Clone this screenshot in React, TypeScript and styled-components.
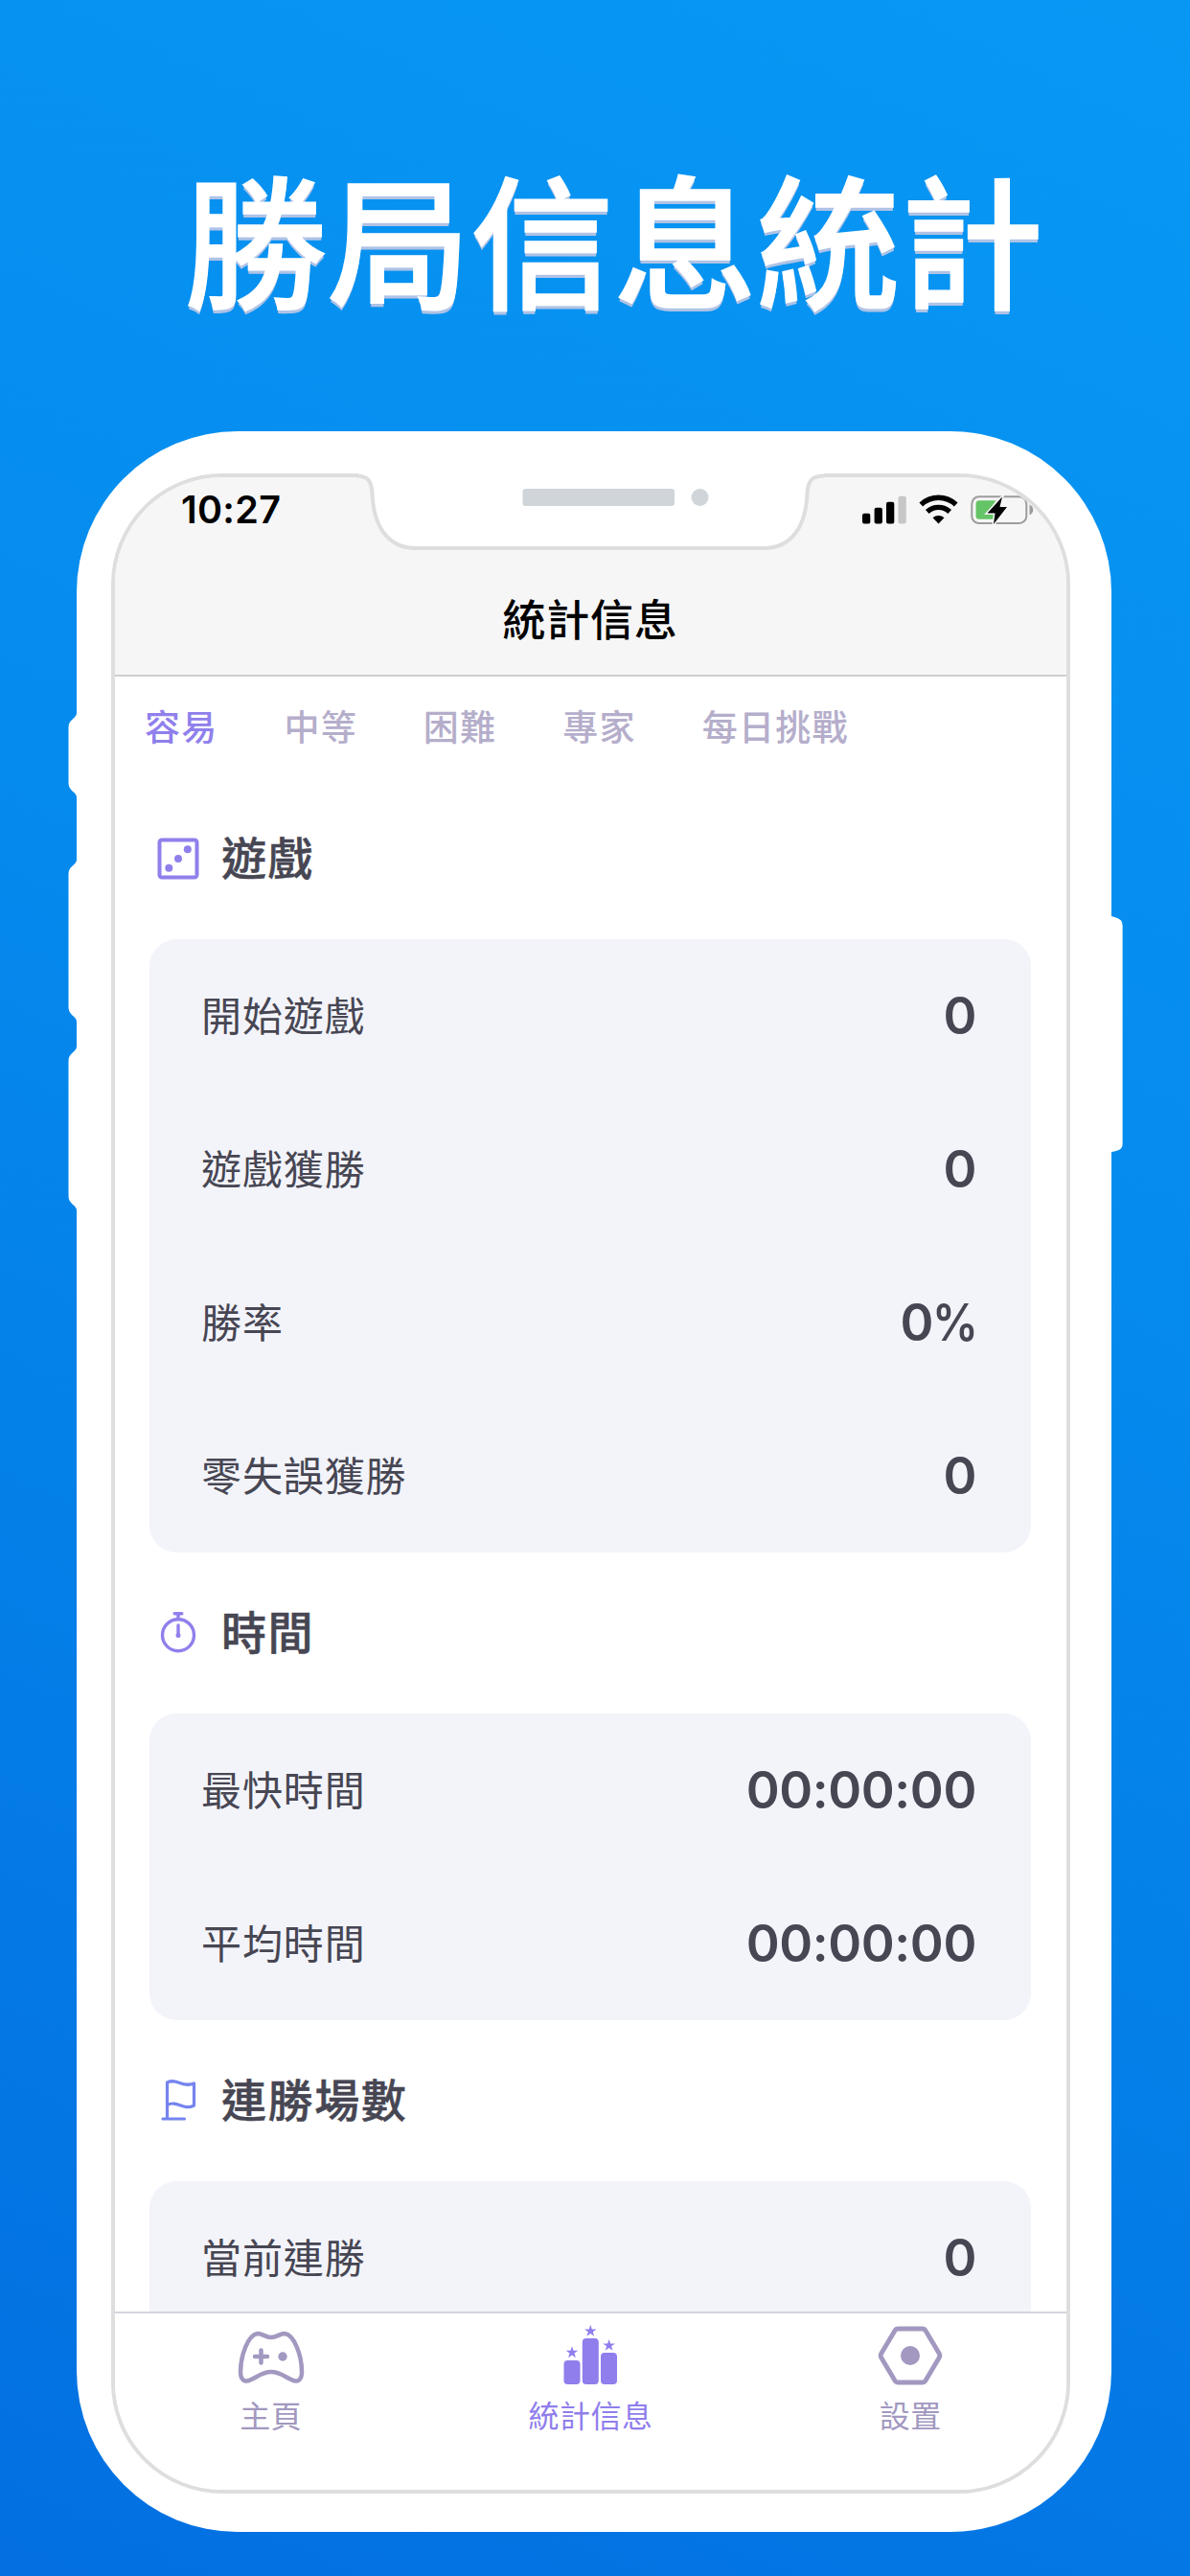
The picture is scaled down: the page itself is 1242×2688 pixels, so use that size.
import React from "react";
import styled, { createGlobalStyle } from "styled-components";

const CJK = `"Noto Sans CJK TC", sans-serif`;
const LATIN = `Inter, "Noto Sans CJK TC", sans-serif`;

const GlobalStyle = createGlobalStyle`
  * { box-sizing: border-box; }
  body { margin: 0; }
`;

const Poster = styled.main`
  width: 1242px;
  height: 2688px;
  overflow: hidden;
  display: flex;
  flex-direction: column;
  background: linear-gradient(205deg, #0898f4 0%, #058bee 40%, #036fe1 100%);
  font-family: ${CJK};
`;

const Headline = styled.h1`
  margin: 0;
  height: 450px;
  padding: 141px 0 0 192px;
  color: #fff;
  font-size: 149.5px;
  line-height: 210px;
  font-weight: 500;
  white-space: nowrap;
  -webkit-text-stroke: 1.5px #fff;
  text-shadow: 0 2px 0 #afc3e6, 0 4px 0 #afc3e6;
`;

const Phone = styled.div`
  position: relative;
  width: 1080px;
  height: 2192px;
  margin-left: 80px;
  padding: 44px 43px 40px 36px;
  border-radius: 168px;
  background: #fff;
`;

const SideKeys = styled.svg<{ $left: number }>`
  position: absolute;
  top: 0;
  left: ${(p) => p.$left}px;
`;

const Screen = styled.div`
  height: 2108px;
  border: 4px solid #dedede;
  border-radius: 116px;
  overflow: hidden;
  display: flex;
  flex-direction: column;
  background: #fff;
`;

const NotchArt = styled.svg`
  position: absolute;
  top: 40px;
  left: 280px;
`;

const NavBar = styled.header`
  flex: none;
  height: 208px;
  background: #f6f6f6;
  border-bottom: 2px solid #cfcfcf;
`;

const StatusBar = styled.div`
  display: flex;
  justify-content: space-between;
  height: 72px;
  padding: 13px 0 0 69px;
`;

const Clock = styled.span`
  padding-top: 3px;
  font: 600 39.5px/36px ${LATIN};
  letter-spacing: 0.3px;
  color: #000;
`;

const NavTitle = styled.h2`
  margin: 42px 0 0;
  font-size: 45px;
  line-height: 66px;
  font-weight: 500;
  text-align: center;
  letter-spacing: 0.7px;
  color: #000;
  padding-right: 1px;
`;

const Tabs = styled.nav`
  flex: none;
  display: flex;
  gap: 68.8px;
  height: 106px;
  padding: 24px 0 0 31px;
`;

const Tab = styled.span<{ $active?: boolean }>`
  font-size: 37px;
  line-height: 54px;
  letter-spacing: 1.3px;
  font-weight: 500;
  color: ${(p) => (p.$active ? "#8f80ec" : "#b5aecb")};
`;

const Content = styled.section`
  flex: 1;
  min-height: 0;
  overflow: hidden;
  padding: 0 37px 0 36px;
`;

const SectionHead = styled.div`
  display: flex;
  align-items: center;
  height: 168px;
  padding: 0 0 0 5px;
`;

const SectionTitle = styled.h3`
  margin: 0 0 7px 20px;
  font-size: 47px;
  line-height: 68px;
  letter-spacing: 1.6px;
  font-weight: 500;
  -webkit-text-stroke: 0.5px #474653;
  color: #474653;
`;

const Card = styled.div`
  background: #f3f4fa;
  border-radius: 28px;
`;

const Row = styled.div`
  display: flex;
  align-items: center;
  justify-content: space-between;
  height: 160px;
  padding: 0 57px 0 54px;
  color: #474653;
`;

const Label = styled.span`
  margin-bottom: 4px;
  font-size: 42px;
  line-height: 60px;
  letter-spacing: 0.9px;
`;

const Value = styled.span`
  font: 600 53px/64px ${LATIN};
  letter-spacing: -0.4px;
`;

const Percent = styled.span`
  display: inline-block;
  width: 46px;
  margin-left: -1px;
  transform: scaleX(0.9);
  transform-origin: left;
`;

const TabBar = styled.footer`
  flex: none;
  display: grid;
  grid-template-columns: repeat(3, 1fr);
  height: 186px;
  margin: 0 -4px;
  border-top: 2px solid #d6d4de;
  background: #fff;
`;

const BarItem = styled.div<{ $active?: boolean }>`
  display: flex;
  flex-direction: column;
  align-items: center;
  padding-top: 8px;
  font-size: 32px;
  line-height: 46px;
  letter-spacing: 0.5px;
  color: ${(p) => (p.$active ? "#8f7eec" : "#a298c0")};
  svg { margin-bottom: 6px; }
`;

const DiceIcon = () => (
  <svg width="50" height="50" viewBox="0 0 50 50" fill="none">
    <rect x="5.500" y="5.500" width="39" height="39" rx="2.500" stroke="#8f80ec" strokeWidth="4" />
    <circle cx="15.300" cy="34.700" r="4" fill="#8f80ec" />
    <circle cx="25" cy="25" r="4" fill="#8f80ec" />
    <circle cx="34.800" cy="15.200" r="4" fill="#8f80ec" />
  </svg>
);

const StopwatchIcon = () => (
  <svg width="50" height="50" viewBox="0 0 50 50" fill="none" stroke="#8f80ec">
    <circle cx="25" cy="27.200" r="16.500" strokeWidth="3.400" />
    <path d="M25 17v10M25 5v5M21.200 4.800h7.600" strokeWidth="3.400" strokeLinecap="round" />
    <circle cx="25" cy="27.500" r="2.500" fill="#8f80ec" stroke="none" />
  </svg>
);

const FlagIcon = () => (
  <svg width="50" height="50" viewBox="0 0 50 50" fill="none" stroke="#7584ee" strokeWidth="3.200" strokeLinecap="round" strokeLinejoin="round">
    <path d="M13.500 44V6C24 1 29 12 41.500 7V30C30 36 24 24 13.500 29.500M9 44h22.500" />
  </svg>
);

const GamepadIcon = () => (
  <svg width="72" height="68" viewBox="0 0 72 68" fill="none" stroke="#a298c0" strokeWidth="4.500" strokeLinecap="round">
    <path d="M22 13C12 14 4 36 4 53C4 61 8 65 15 61C22 58 27 53 36 53C45 53 50 58 57 61C64 65 68 61 68 53C68 36 60 14 50 13C45 13 42 17 36 17C30 17 27 13 22 13Z" />
    <path d="M19 37h13M25.500 30.500v13" />
    <circle cx="48" cy="37" r="4.700" fill="#a298c0" stroke="none" />
  </svg>
);

const star = (x: number, y: number) =>
  Array.from({ length: 10 }, (_, i) => {
    const r = i % 2 ? 2.6 : 6.6;
    const a = (Math.PI * i) / 5 - Math.PI / 2;
    return `${(x + r * Math.cos(a)).toFixed(2)},${(y + r * Math.sin(a)).toFixed(2)}`;
  }).join(" ");

const PodiumIcon = () => (
  <svg width="72" height="68" viewBox="0 0 72 68" fill="#8f7eec">
    <rect x="8.500" y="41" width="17" height="25" rx="4" />
    <rect x="27.800" y="18" width="17" height="48" rx="4" />
    <rect x="47" y="33" width="17" height="33" rx="4" />
    <polygon points={star(17, 32.8)} />
    <polygon points={star(36.3, 10.5)} />
    <polygon points={star(55.6, 25.5)} />
  </svg>
);

const SettingsIcon = () => (
  <svg width="72" height="68" viewBox="0 0 72 68" fill="none">
    <path d="M23.500 8h25q2.500 0 3.700 2.200l14 23.600q1.300 2.200 0 4.400l-14 23.600q-1.200 2.200-3.700 2.200h-25q-2.500 0-3.700-2.200l-14-23.600q-1.300-2.200 0-4.400l14-23.600q1.200-2.200 3.700-2.200z" stroke="#a298c0" strokeWidth="4.800" />
    <circle cx="36" cy="36" r="10" fill="#a298c0" />
  </svg>
);

const StatusIcons = () => (
  <svg width="213" height="50" viewBox="900 511 213 50">
    <rect x="900" y="535.700" width="8.300" height="10.800" rx="2" />
    <rect x="912.600" y="529.700" width="8.300" height="16.800" rx="2" />
    <rect x="925" y="523.700" width="8.300" height="22.800" rx="2" />
    <rect x="937.500" y="517.700" width="8.300" height="28.800" rx="2" fill="#c7c7c7" />
    <path d="M961.300 526.500A26.500 26.500 0 0 1 997.700 526.500" fill="none" stroke="#000" strokeWidth="5.400" />
    <path d="M967.800 534A17 17 0 0 1 991.200 534" fill="none" stroke="#000" strokeWidth="5.400" />
    <path d="M979.500 546.500l-6-6.300a9 9 0 0 1 12 0z" />
    <rect x="1014.300" y="518.300" width="57" height="27.700" rx="7.500" fill="none" stroke="#9c9c9c" strokeWidth="2" />
    <path d="M1074.500 526.500c5 2 5 9 0 11z" fill="#9c9c9c" />
    <path d="M1022 522.300h17.500l-9.500 14.500h8l-1.500 5H1022a3.500 3.500 0 0 1-3.500-3.500v-12.500a3.500 3.500 0 0 1 3.500-3.500z" fill="#65c466" />
    <path d="M1046 518.500l-15.500 17h8l-1.500 11.500 14-18h-7.500z" stroke="#f6f6f6" strokeWidth="3" paintOrder="stroke" />
  </svg>
);

const sections = [
  { title: "遊戲", Icon: DiceIcon, rows: [["開始遊戲", "0"], ["遊戲獲勝", "0"], ["勝率", "0%"], ["零失誤獲勝", "0"]] },
  { title: "時間", Icon: StopwatchIcon, rows: [["最快時間", "00:00:00"], ["平均時間", "00:00:00"]] },
  { title: "連勝場數", Icon: FlagIcon, rows: [["當前連勝", "0"]] },
];

export default function App() {
  return (
    <Poster>
      <GlobalStyle />
      <Headline>勝局信息統計</Headline>
      <Phone>
        <SideKeys $left={-9} width="12" height="840" fill="#fff">
          <path d="M12 294H9C9 300 .5 300 .5 309V367C.5 376 9 376 9 382H12Z" />
          <path d="M12 447H9C9 453 .5 453 .5 462V601C.5 610 9 610 9 616H12Z" />
          <path d="M12 642H9C9 648 .5 648 .5 657V798C.5 807 9 807 9 813H12Z" />
        </SideKeys>
        <SideKeys $left={1077} width="16" height="840" fill="#fff">
          <path d="M0 506H3C10 508 14.600 509 14.600 516V743C14.600 749 12 750.500 3 752H0Z" />
        </SideKeys>
        <Screen>
          <NavBar>
            <StatusBar>
              <Clock>10:27</Clock>
              <StatusIcons />
            </StatusBar>
            <NavTitle>統計信息</NavTitle>
          </NavBar>
          <Tabs>
            <Tab $active>容易</Tab>
            <Tab>中等</Tab>
            <Tab>困難</Tab>
            <Tab>專家</Tab>
            <Tab>每日挑戰</Tab>
          </Tabs>
          <Content>
            {sections.map(({ title, Icon, rows }) => (
              <div key={title}>
                <SectionHead>
                  <Icon />
                  <SectionTitle>{title}</SectionTitle>
                </SectionHead>
                <Card>
                  {rows.map(([label, value]) => (
                    <Row key={label}>
                      <Label>{label}</Label>
                      <Value>
                        {value.replace("%", "")}
                        {value.endsWith("%") && <Percent>%</Percent>}
                      </Value>
                    </Row>
                  ))}
                </Card>
              </div>
            ))}
          </Content>
          <TabBar>
            <BarItem><GamepadIcon />主頁</BarItem>
            <BarItem $active><PodiumIcon />統計信息</BarItem>
            <BarItem><SettingsIcon />設置</BarItem>
          </TabBar>
        </Screen>
        <NotchArt width="520" height="90" viewBox="360 490 520 90">
          <path d="M374 490V497C384 497 387.500 502 388.500 514C389.500 548 404 572 434 572H797C827 572 841.500 548 842.500 514C843.500 502 847 497 860 497V490Z" fill="#fff" />
          <path d="M372 496.500C384 496.500 387.500 502 388.500 514C389.500 548 404 572 434 572H797C827 572 841.500 548 842.500 514C843.500 502 847 496.500 860 496.500" fill="none" stroke="#dedede" strokeWidth="4" />
          <rect x="545.500" y="510" width="158.500" height="18" rx="3" fill="#cfd5d9" />
          <circle cx="730.500" cy="519" r="9" fill="#cfd5d9" />
        </NotchArt>
      </Phone>
    </Poster>
  );
}
